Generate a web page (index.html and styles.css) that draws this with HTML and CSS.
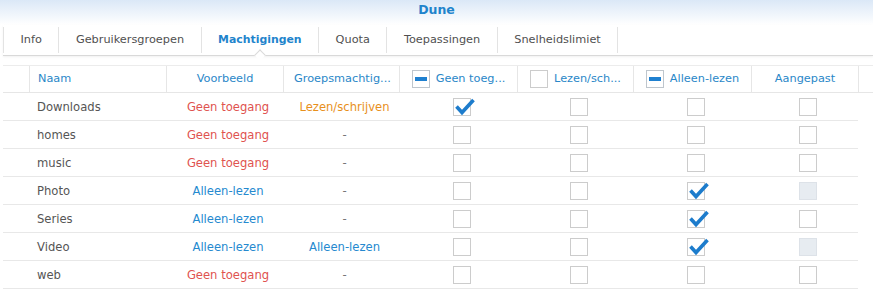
FILE: index.html
```html
<!DOCTYPE html>
<html lang="nl">
<head>
<meta charset="utf-8">
<title>Dune</title>
<link rel="stylesheet" href="styles.css">
</head>
<body>
<div class="window">
  <header class="titlebar">Dune</header>
  <nav class="tabs">
    <div class="tab">Info</div>
    <div class="tab">Gebruikersgroepen</div>
    <div class="tab active">Machtigingen<span class="notch"></span></div>
    <div class="tab">Quota</div>
    <div class="tab">Toepassingen</div>
    <div class="tab">Snelheidslimiet</div>
  </nav>

  <div class="table">
    <div class="hrow">
      <div class="hc"></div>
      <div class="hc left">Naam</div>
      <div class="hc">Voorbeeld</div>
      <div class="hc left pad">Groepsmachtig...</div>
      <div class="hc"><span class="cb mixed"></span><span class="htxt">Geen toeg...</span></div>
      <div class="hc"><span class="cb"></span><span class="htxt">Lezen/sch...</span></div>
      <div class="hc"><span class="cb mixed"></span><span class="htxt">Alleen-lezen</span></div>
      <div class="hc">Aangepast</div>
      <div class="hc last"></div>
    </div>

    <div class="row">
      <div class="c"></div>
      <div class="c name">Downloads</div>
      <div class="c no">Geen toegang</div>
      <div class="c rw">Lezen/schrijven</div>
      <div class="c"><span class="cb on"><svg class="tick" viewBox="0 0 22 18"><polyline points="2.5,8.5 8,14.5 19.5,2"/></svg></span></div>
      <div class="c"><span class="cb"></span></div>
      <div class="c"><span class="cb"></span></div>
      <div class="c"><span class="cb"></span></div>
    </div>

    <div class="row">
      <div class="c"></div>
      <div class="c name">homes</div>
      <div class="c no">Geen toegang</div>
      <div class="c dash">-</div>
      <div class="c"><span class="cb"></span></div>
      <div class="c"><span class="cb"></span></div>
      <div class="c"><span class="cb"></span></div>
      <div class="c"><span class="cb"></span></div>
    </div>

    <div class="row">
      <div class="c"></div>
      <div class="c name">music</div>
      <div class="c no">Geen toegang</div>
      <div class="c dash">-</div>
      <div class="c"><span class="cb"></span></div>
      <div class="c"><span class="cb"></span></div>
      <div class="c"><span class="cb"></span></div>
      <div class="c"><span class="cb"></span></div>
    </div>

    <div class="row">
      <div class="c"></div>
      <div class="c name">Photo</div>
      <div class="c ro">Alleen-lezen</div>
      <div class="c dash">-</div>
      <div class="c"><span class="cb"></span></div>
      <div class="c"><span class="cb"></span></div>
      <div class="c"><span class="cb on"><svg class="tick" viewBox="0 0 22 18"><polyline points="2.5,8.5 8,14.5 19.5,2"/></svg></span></div>
      <div class="c"><span class="cb dis"></span></div>
    </div>

    <div class="row">
      <div class="c"></div>
      <div class="c name">Series</div>
      <div class="c ro">Alleen-lezen</div>
      <div class="c dash">-</div>
      <div class="c"><span class="cb"></span></div>
      <div class="c"><span class="cb"></span></div>
      <div class="c"><span class="cb on"><svg class="tick" viewBox="0 0 22 18"><polyline points="2.5,8.5 8,14.5 19.5,2"/></svg></span></div>
      <div class="c"><span class="cb"></span></div>
    </div>

    <div class="row">
      <div class="c"></div>
      <div class="c name">Video</div>
      <div class="c ro">Alleen-lezen</div>
      <div class="c ro">Alleen-lezen</div>
      <div class="c"><span class="cb"></span></div>
      <div class="c"><span class="cb"></span></div>
      <div class="c"><span class="cb on"><svg class="tick" viewBox="0 0 22 18"><polyline points="2.5,8.5 8,14.5 19.5,2"/></svg></span></div>
      <div class="c"><span class="cb dis"></span></div>
    </div>

    <div class="row">
      <div class="c"></div>
      <div class="c name">web</div>
      <div class="c no">Geen toegang</div>
      <div class="c dash">-</div>
      <div class="c"><span class="cb"></span></div>
      <div class="c"><span class="cb"></span></div>
      <div class="c"><span class="cb"></span></div>
      <div class="c"><span class="cb"></span></div>
    </div>
  </div>
</div>
</body>
</html>
```

FILE: styles.css
```css
* { box-sizing: border-box; }

html, body {
  margin: 0;
  padding: 0;
  background: #ffffff;
}

body {
  font-family: "DejaVu Sans", Verdana, sans-serif;
  color: #505050;
}

.window {
  width: 873px;
  height: 304px;
  overflow: hidden;
  background: #fff;
}

.titlebar {
  height: 25px;
  padding-top: 2px;
  text-align: center;
  font-weight: bold;
  font-size: 12.5px;
  color: #1f84cc;
  background: linear-gradient(#dbe8f7, #ffffff);
}

.tabs {
  display: flex;
  height: 31px;
  margin-left: 3px;
  border-bottom: 1px solid #d9d9d9;
  box-shadow: 0 1px 2px rgba(0, 0, 0, 0.06);
}

.tab {
  position: relative;
  display: flex;
  align-items: center;
  padding: 0 16.5px 2px 16.5px;
  font-size: 11.3px;
  color: #505050;
  border-right: 1px solid #e3e3e3;
  margin: 2px 0 2px 0;
}

.tab:first-child {
  border-left: 1px solid #e3e3e3;
}

.tab.active {
  font-weight: bold;
  font-size: 10.9px;
  color: #1f84cc;
}

.notch {
  position: absolute;
  left: 50%;
  bottom: -6px;
  width: 8px;
  height: 8px;
  margin-left: -4px;
  background: #fff;
  border-left: 1px solid #d9d9d9;
  border-top: 1px solid #d9d9d9;
  transform: rotate(45deg);
}

.table {
  margin-top: 9px;
}

.hrow {
  display: grid;
  grid-template-columns: 27px 137px 117px 116px 118px 116px 118px 107px 1fr;
  height: 28px;
  margin-left: 3px;
  border-top: 1px solid #ececec;
  border-bottom: 1px solid #e6e6e6;
  font-size: 11.3px;
  color: #2a87c8;
}

.hc {
  display: flex;
  align-items: center;
  justify-content: center;
  gap: 6px;
  border-right: 1px solid #e6e6e6;
  white-space: nowrap;
  overflow: hidden;
  padding-bottom: 1px;
}

.hc.left {
  justify-content: flex-start;
  padding-left: 8px;
}

.hc.pad {
  padding-left: 10px;
}

.hc.last {
  border-right: none;
}

.htxt {
  white-space: nowrap;
}

.row {
  display: grid;
  grid-template-columns: 26px 137px 117px 116px 118px 116px 118px 107px;
  height: 28px;
  width: 855px;
  margin-left: 3px;
  border-bottom: 1px solid #e8e8e8;
  font-size: 11.6px;
}

.c {
  display: flex;
  align-items: center;
  justify-content: center;
  padding-left: 7px;
  white-space: nowrap;
}

.c.name {
  justify-content: flex-start;
  padding-left: 8px;
  color: #555555;
}

.no { color: #e0534f; }
.rw { color: #e8901c; }
.ro { color: #2589cf; }
.dash { color: #777777; }

.cb {
  position: relative;
  display: block;
  flex: none;
  width: 18px;
  height: 18px;
  border: 1px solid #cccccc;
  background: #ffffff;
}

.cb.dis {
  background: #e7ecf1;
  border-color: #dde2e8;
}

.cb.mixed {
  border-color: #bfc6cd;
}

.cb.mixed::after {
  content: "";
  position: absolute;
  left: 2px;
  top: 6px;
  width: 12px;
  height: 4px;
  background: #1f80d0;
}

.tick {
  position: absolute;
  left: 0;
  top: -1px;
  width: 22px;
  height: 18px;
  overflow: visible;
}

.tick polyline {
  fill: none;
  stroke: #1d7ccc;
  stroke-width: 3.6;
  stroke-linejoin: miter;
}
```
